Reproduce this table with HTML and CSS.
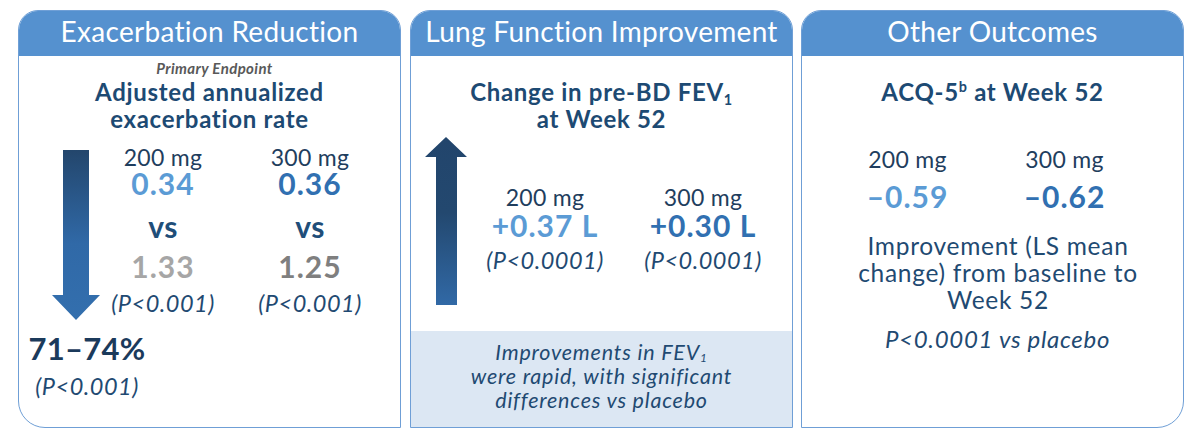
FILE: index.html
```html
<!DOCTYPE html>
<html lang="en">
<head>
<meta charset="utf-8">
<title>Outcomes</title>
<link rel="stylesheet" href="styles.css">
</head>
<body>
<div class="panels">
  <section class="card card-left">
    <h2 class="card-head">Exacerbation Reduction</h2>
    <div class="card-body">
      <div class="kicker">Primary Endpoint</div>
      <div class="title">Adjusted annualized<br>exacerbation rate</div>
      <div class="row row-down">
        <svg class="arrow-down" width="48" height="170" viewBox="0 0 48 170" aria-hidden="true">
          <defs>
            <linearGradient id="gd" x1="0" y1="0" x2="0" y2="1">
              <stop offset="0" stop-color="#23466c"/>
              <stop offset="0.55" stop-color="#3069a7"/>
              <stop offset="1" stop-color="#336fae"/>
            </linearGradient>
          </defs>
          <polygon points="11,0 37,0 37,145 48,145 24,170 0,145 11,145" fill="url(#gd)"/>
        </svg>
        <div class="cols cols-1">
          <div class="col">
            <div class="dose">200 mg</div>
            <div class="val val-light">0.34</div>
            <div class="vs">vs</div>
            <div class="val val-grey-l">1.33</div>
            <div class="pval">(P&lt;0.001)</div>
          </div>
          <div class="col">
            <div class="dose">300 mg</div>
            <div class="val val-dark">0.36</div>
            <div class="vs">vs</div>
            <div class="val val-grey-d">1.25</div>
            <div class="pval">(P&lt;0.001)</div>
          </div>
        </div>
      </div>
      <div class="result">
        <div class="result-num">71–74%</div>
        <div class="pval result-p">(P&lt;0.001)</div>
      </div>
    </div>
  </section>

  <section class="card card-mid">
    <h2 class="card-head">Lung Function Improvement</h2>
    <div class="card-body">
      <div class="title title-top">Change in pre-BD FEV<sub>1</sub><br>at Week 52</div>
      <div class="row row-up">
        <svg class="arrow-up" width="42" height="168" viewBox="0 0 42 168" aria-hidden="true">
          <defs>
            <linearGradient id="gu" x1="0" y1="0" x2="0" y2="1">
              <stop offset="0" stop-color="#22456c"/>
              <stop offset="0.45" stop-color="#23486f"/>
              <stop offset="1" stop-color="#3169a6"/>
            </linearGradient>
          </defs>
          <polygon points="21,0 42,20 32,20 32,168 11,168 11,20 0,20" fill="url(#gu)"/>
        </svg>
        <div class="cols cols-2">
          <div class="col">
            <div class="dose">200 mg</div>
            <div class="val val-light">+0.37 L</div>
            <div class="pval">(P&lt;0.0001)</div>
          </div>
          <div class="col">
            <div class="dose">300 mg</div>
            <div class="val val-dark">+0.30 L</div>
            <div class="pval">(P&lt;0.0001)</div>
          </div>
        </div>
      </div>
      <div class="note">
        <div class="note-line">Improvements in FEV<sub class="note-sub">1</sub></div>
        <div class="note-line">were rapid, with significant</div>
        <div class="note-line">differences vs placebo</div>
      </div>
    </div>
  </section>

  <section class="card card-right">
    <h2 class="card-head">Other Outcomes</h2>
    <div class="card-body">
      <div class="title title-top">ACQ-5<sup>b</sup> at Week 52</div>
      <div class="cols cols-3">
        <div class="col">
          <div class="dose">200 mg</div>
          <div class="val val-light">–0.59</div>
        </div>
        <div class="col">
          <div class="dose">300 mg</div>
          <div class="val val-dark">–0.62</div>
        </div>
      </div>
      <div class="desc">Improvement (LS mean<br>change) from baseline to<br>Week 52</div>
      <div class="pline">P&lt;0.0001 vs placebo</div>
    </div>
  </section>
</div>
</body>
</html>
```

FILE: styles.css
```css
* { box-sizing: border-box; }

html, body {
  margin: 0;
  padding: 0;
  background: #ffffff;
}

body {
  font-family: Lato, "Open Sans", "DejaVu Sans", sans-serif;
  color: #1f4a72;
}

.panels {
  display: flex;
  gap: 9px;
  padding: 10px 0 0 18px;
}

.card {
  width: 383px;
  height: 418px;
  border: 1px solid #6f9fd6;
  border-radius: 20px 20px 0 0;
  overflow: hidden;
  display: flex;
  flex-direction: column;
  background: #fff;
}

.card-right { margin-left: -1px; }
.card-left { border-bottom-left-radius: 27px; }
.card-right { border-bottom-right-radius: 27px; }

.card-head {
  margin: 0;
  height: 45px;
  flex: none;
  background: #5591cf;
  color: #ffffff;
  font-weight: 400;
  font-size: 28px;
  letter-spacing: 0.3px;
  line-height: 40px;
  padding-bottom: 5px;
  text-align: center;
  white-space: nowrap;
}

.card-body {
  flex: 1;
  display: flex;
  flex-direction: column;
  padding-top: 3px;
}

.kicker {
  font-size: 15px;
  line-height: 18px;
  letter-spacing: 0.4px;
  font-weight: 700;
  font-style: italic;
  color: #595959;
  text-align: center;
  padding-left: 10px;
  margin-top: 0.2px;
}

.title {
  margin-top: 0.4px;
  font-size: 24px;
  line-height: 27.6px;
  letter-spacing: 0.7px;
  font-weight: 700;
  color: #1d4a73;
  text-align: center;
  white-space: nowrap;
}

.title-top { margin-top: 18.6px; }

sub, sup {
  font-size: 0.6em;
  line-height: 0;
}
sub { vertical-align: -0.3em; }
sup { vertical-align: 0.65em; }

.note-sub { font-size: 0.55em; vertical-align: -0.15em; }

.row {
  display: flex;
  align-items: flex-start;
}

.row-down { margin-top: 12.8px; }
.arrow-down { flex: none; margin-left: 33px; margin-top: 4.4px; }

.row-up { margin-top: 4.2px; }
.arrow-up { flex: none; margin-left: 14px; }

.cols { display: flex; }
.cols-1 { gap: 21px; }
.cols-1 .col { width: 126px; }

.cols-2 { gap: 2px; padding-top: 49.3px; }
.cols-2 .col { width: 156px; }

.cols-3 { gap: 7px; padding-left: 30.5px; margin-top: 42.4px; }
.cols-3 .col { width: 150px; }

.col {
  display: flex;
  flex-direction: column;
  align-items: center;
  white-space: nowrap;
}

.dose {
  font-size: 23px;
  line-height: 22px;
  letter-spacing: 0.3px;
  color: #1f3e5e;
}

.val {
  font-size: 30px;
  line-height: 30px;
  letter-spacing: 1px;
  font-weight: 700;
  margin-top: 0.6px;
}

.cols-2 .val { margin-top: 1.9px; }
.cols-3 .val { margin-top: 11.8px; }

.val-light { color: #5b9bd5; }
.val-dark { color: #3170b1; }
.val-grey-l { color: #a6a6a6; margin-top: 10.3px; }
.val-grey-d { color: #7f7f7f; margin-top: 10.3px; }

.vs {
  font-size: 30px;
  line-height: 30px;
  letter-spacing: 0.5px;
  font-weight: 700;
  color: #1f4e79;
  margin-top: 12.7px;
}

.pval {
  font-size: 23.5px;
  line-height: 23.5px;
  letter-spacing: 0.5px;
  font-style: italic;
  color: #1f4a72;
  margin-top: 11.3px;
}

.cols-2 .pval { margin-top: 8.5px; }

.result {
  width: 136px;
  margin-top: 13px;
  display: flex;
  flex-direction: column;
  align-items: center;
  white-space: nowrap;
}

.result-num {
  font-size: 31px;
  line-height: 31px;
  letter-spacing: 0.3px;
  font-weight: 700;
  color: #1b3a5b;
}

.result .result-p { margin-top: 10.7px; }

.note {
  margin-top: auto;
  height: 96px;
  background: #dce7f3;
  padding-top: 8.7px;
  font-size: 21.5px;
  line-height: 24px;
  letter-spacing: 0.8px;
  font-style: italic;
  color: #1f4a72;
  text-align: center;
  white-space: nowrap;
}

.note-line { height: 24px; }

.desc {
  margin-top: 22px;
  padding-left: 11px;
  font-size: 24.5px;
  line-height: 26.7px;
  letter-spacing: 0.7px;
  color: #1f4a72;
  text-align: center;
  white-space: nowrap;
}

.pline {
  margin-top: 14px;
  padding-left: 10px;
  font-size: 24px;
  line-height: 24px;
  letter-spacing: 0.7px;
  font-style: italic;
  color: #1f4a72;
  text-align: center;
  white-space: nowrap;
}
```
